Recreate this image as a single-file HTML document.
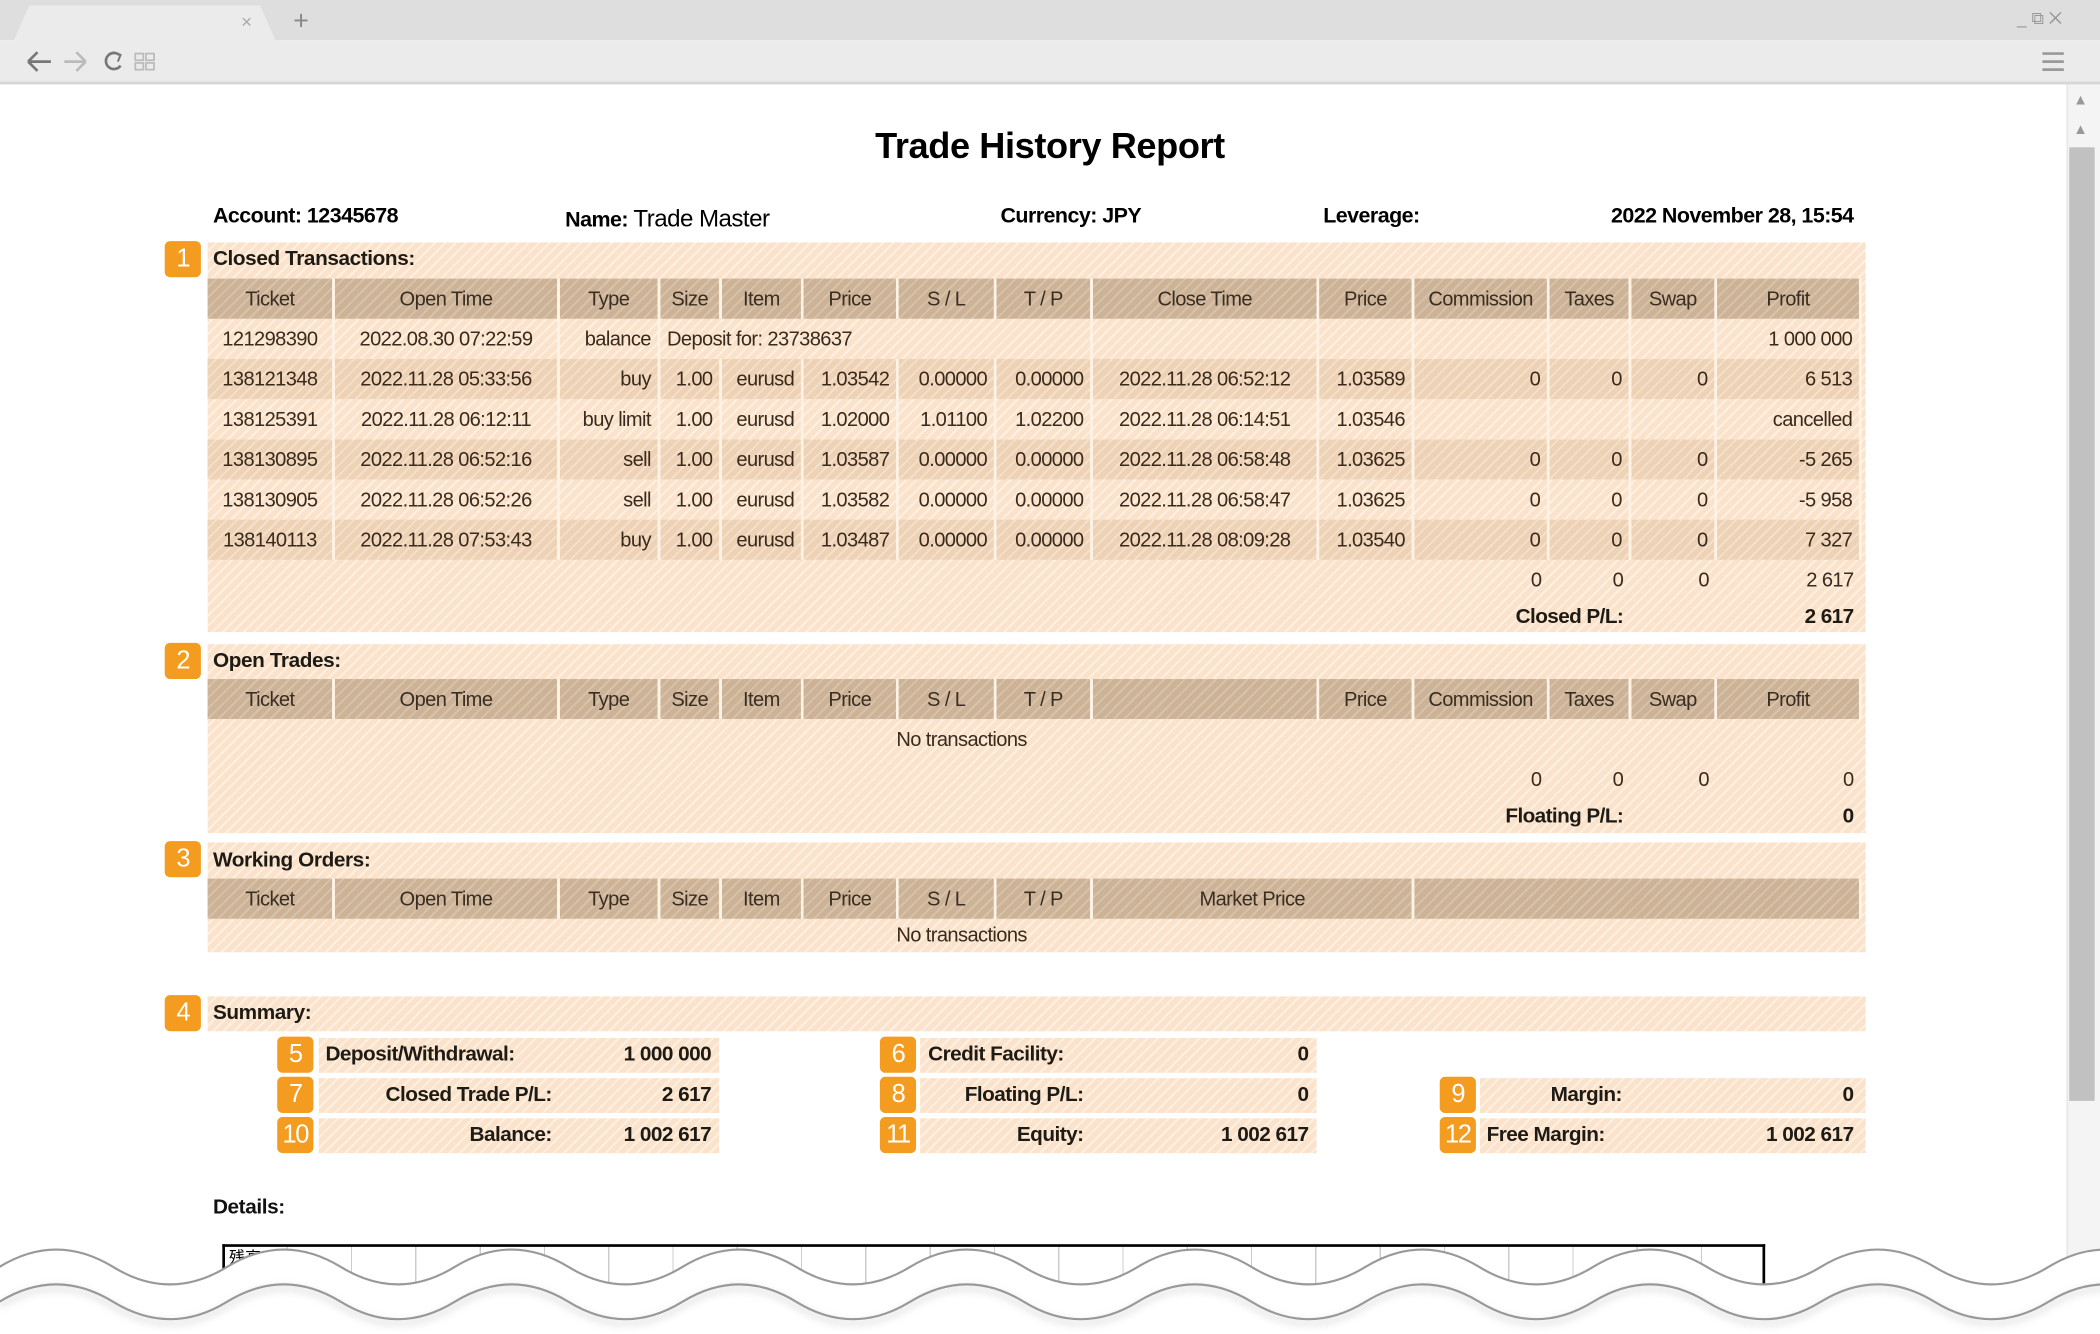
<!DOCTYPE html>
<html><head><meta charset="utf-8">
<style>
*{margin:0;padding:0;box-sizing:border-box}
html,body{width:2100px;height:1334px;overflow:hidden;background:#fff}
#w{position:absolute;left:0;top:0;width:1568px;height:996px;transform:scale(1.33929);transform-origin:0 0;font-family:"Liberation Sans",sans-serif;color:#3a2a1c}
.abs{position:absolute}
.tabbar{left:0;top:0;width:1568px;height:30px;background:#dedede}
.tab{left:10px;top:4px;width:196px;height:27px;background:#ebebeb;border-radius:8px 8px 0 0;clip-path:polygon(0 100%,6% 0,94% 0,100% 100%)}
.tool{left:0;top:30px;width:1568px;height:33px;background:#ebebeb;border-bottom:2px solid #d6d6d6}
.sb{left:1543px;top:63px;width:25px;height:933px;background:#f4f4f4;border-left:1px solid #e4e4e4}
.thumb{left:1545px;top:110px;width:19px;height:712px;background:#c1c1c1}
.title{left:0;width:1568px;top:94px;text-align:center;font:bold 27px "Liberation Sans",sans-serif;color:#000;letter-spacing:-0.3px}
.hd{top:153px;font:bold 16px "Liberation Sans",sans-serif;color:#000;white-space:nowrap;letter-spacing:-0.4px}
.stripe{background:repeating-linear-gradient(135deg,#fbe3cb 0 4px,#fdf0e2 4px 5.5px)}
.sec{left:155px;width:1238px}
.sh{font:bold 15.5px "Liberation Sans",sans-serif;color:#1e1a14;padding:0 4px;line-height:26px;height:26px;letter-spacing:-0.3px}
.badge{width:27px;height:27px;background:#f39c1f;border-radius:4px;color:#fff;font:19px "Liberation Sans",sans-serif;text-align:center;line-height:27px;letter-spacing:-1px}
table{border-collapse:collapse;table-layout:fixed;width:1234px;font-size:15px;letter-spacing:-0.45px}
td,th{height:30px;padding:0 5px;white-space:nowrap;overflow:hidden;border-right:2px solid rgba(255,245,235,.8)}
th{font-weight:normal;text-align:center;background:repeating-linear-gradient(135deg,#ccb398 0 4px,#d8c2a9 4px 5.5px);color:#3a2e22}
td{text-align:right}
tr.d td{background:repeating-linear-gradient(135deg,#eed2b6 0 4px,#f4e0cb 4px 5.5px)}
td.c{text-align:center}td.l{text-align:left}
td.b{font-weight:bold;font-size:15.5px;color:#1e1a14}
.sum{height:26px;font:bold 15.5px "Liberation Sans",sans-serif;color:#1e1a14;line-height:26px;letter-spacing:-0.4px}
.sum span{position:absolute;white-space:nowrap}
</style></head><body><div id="w">
<div class="abs tabbar"></div>
<div class="abs tab"></div>
<div class="abs" style="left:180px;top:8px;color:#aaa;font:14px 'Liberation Sans',sans-serif">×</div>
<div class="abs" style="left:219px;top:5px;color:#888;font:20px 'Liberation Sans',sans-serif">+</div>
<div class="abs" style="left:1506px;top:6px;color:#999;font:13px 'Liberation Sans',sans-serif">_ &#x29C9; ✕</div>
<div class="abs tool"></div>
<svg class="abs" style="left:18px;top:36px" width="105" height="20" viewBox="0 0 105 20" fill="none" stroke-width="2">
<path d="M3 10H20M3 10L10 3M3 10L10 17" stroke="#777"/>
<path d="M30 10H46M46 10L39 3M46 10L39 17" stroke="#bbb"/>
<path d="M71 5A6 6 0 1 0 72 13" stroke="#777"/><path d="M66 3L72 5L70 10" stroke="#777" stroke-width="1.5"/>
<rect x="83" y="4" width="6" height="5" stroke="#bbb" stroke-width="1.3"/><rect x="91" y="4" width="6" height="5" stroke="#bbb" stroke-width="1.3"/><rect x="83" y="11" width="6" height="5" stroke="#bbb" stroke-width="1.3"/><rect x="91" y="11" width="6" height="5" stroke="#bbb" stroke-width="1.3"/>
</svg>
<svg class="abs" style="left:1524px;top:37px" width="20" height="18"><path d="M1 3H17M1 9H17M1 15H17" stroke="#999" stroke-width="2"/></svg>
<div class="abs sb"></div>
<div class="abs" style="left:1548px;top:69px;color:#999;font:11px 'Liberation Sans'">▲</div>
<div class="abs" style="left:1548px;top:91px;color:#999;font:11px 'Liberation Sans'">▲</div>
<div class="abs thumb"></div>

<div class="abs title">Trade History Report</div>
<div class="abs hd" style="left:159px">Account: 12345678</div>
<div class="abs hd" style="left:422px">Name: <span style="font-weight:normal;font-size:18px">Trade Master</span></div>
<div class="abs hd" style="left:747px">Currency: JPY</div>
<div class="abs hd" style="left:988px">Leverage:</div>
<div class="abs hd" style="left:1176px;width:208px;text-align:right">2022 November 28, 15:54</div>

<!-- Section 1 -->
<div class="abs badge" style="left:123px;top:180px">1</div>
<div class="abs sec stripe" style="top:181px;height:291px">
<div class="sh">Closed Transactions:</div>
<table style="margin-top:1px">
<colgroup><col style="width:94px"><col style="width:168px"><col style="width:75px"><col style="width:46px"><col style="width:61px"><col style="width:71px"><col style="width:73px"><col style="width:72px"><col style="width:169px"><col style="width:71px"><col style="width:101px"><col style="width:61px"><col style="width:64px"><col style="width:108px"></colgroup>
<tr><th>Ticket</th><th>Open Time</th><th>Type</th><th>Size</th><th>Item</th><th>Price</th><th>S / L</th><th>T / P</th><th>Close Time</th><th>Price</th><th>Commission</th><th>Taxes</th><th>Swap</th><th>Profit</th></tr>
<tr><td class="c">121298390</td><td class="c">2022.08.30 07:22:59</td><td>balance</td><td class="l" colspan="5">Deposit for: 23738637</td><td></td><td></td><td></td><td></td><td></td><td>1 000 000</td></tr>
<tr class="d"><td class="c">138121348</td><td class="c">2022.11.28 05:33:56</td><td>buy</td><td>1.00</td><td>eurusd</td><td>1.03542</td><td>0.00000</td><td>0.00000</td><td class="c">2022.11.28 06:52:12</td><td>1.03589</td><td>0</td><td>0</td><td>0</td><td>6 513</td></tr>
<tr><td class="c">138125391</td><td class="c">2022.11.28 06:12:11</td><td>buy limit</td><td>1.00</td><td>eurusd</td><td>1.02000</td><td>1.01100</td><td>1.02200</td><td class="c">2022.11.28 06:14:51</td><td>1.03546</td><td></td><td></td><td></td><td>cancelled</td></tr>
<tr class="d"><td class="c">138130895</td><td class="c">2022.11.28 06:52:16</td><td>sell</td><td>1.00</td><td>eurusd</td><td>1.03587</td><td>0.00000</td><td>0.00000</td><td class="c">2022.11.28 06:58:48</td><td>1.03625</td><td>0</td><td>0</td><td>0</td><td>-5 265</td></tr>
<tr><td class="c">138130905</td><td class="c">2022.11.28 06:52:26</td><td>sell</td><td>1.00</td><td>eurusd</td><td>1.03582</td><td>0.00000</td><td>0.00000</td><td class="c">2022.11.28 06:58:47</td><td>1.03625</td><td>0</td><td>0</td><td>0</td><td>-5 958</td></tr>
<tr class="d"><td class="c">138140113</td><td class="c">2022.11.28 07:53:43</td><td>buy</td><td>1.00</td><td>eurusd</td><td>1.03487</td><td>0.00000</td><td>0.00000</td><td class="c">2022.11.28 08:09:28</td><td>1.03540</td><td>0</td><td>0</td><td>0</td><td>7 327</td></tr>
<tr><td colspan="10" style="border:0"></td><td style="border:0">0</td><td style="border:0">0</td><td style="border:0">0</td><td style="border:0">2 617</td></tr>
<tr><td colspan="12" class="b" style="border:0;height:25px">Closed P/L:</td><td style="border:0;height:25px"></td><td class="b" style="border:0;height:25px">2 617</td></tr>
</table></div>

<!-- Section 2 -->
<div class="abs badge" style="left:123px;top:480px">2</div>
<div class="abs sec stripe" style="top:481px;height:141px">
<div class="sh">Open Trades:</div>
<table>
<colgroup><col style="width:94px"><col style="width:168px"><col style="width:75px"><col style="width:46px"><col style="width:61px"><col style="width:71px"><col style="width:73px"><col style="width:72px"><col style="width:169px"><col style="width:71px"><col style="width:101px"><col style="width:61px"><col style="width:64px"><col style="width:108px"></colgroup>
<tr><th style="height:29px">Ticket</th><th>Open Time</th><th>Type</th><th>Size</th><th>Item</th><th>Price</th><th>S / L</th><th>T / P</th><th></th><th>Price</th><th>Commission</th><th>Taxes</th><th>Swap</th><th>Profit</th></tr>
<tr><td colspan="13" class="c" style="border:0">No transactions</td><td style="border:0"></td></tr>
<tr><td colspan="10" style="border:0"></td><td style="border:0">0</td><td style="border:0">0</td><td style="border:0">0</td><td style="border:0">0</td></tr>
<tr><td colspan="12" class="b" style="border:0;height:26px">Floating P/L:</td><td style="border:0;height:26px"></td><td class="b" style="border:0;height:26px">0</td></tr>
</table></div>

<!-- Section 3 -->
<div class="abs badge" style="left:123px;top:628px">3</div>
<div class="abs sec stripe" style="top:629px;height:82px">
<div class="sh" style="height:27px;line-height:27px">Working Orders:</div>
<table>
<colgroup><col style="width:94px"><col style="width:168px"><col style="width:75px"><col style="width:46px"><col style="width:61px"><col style="width:71px"><col style="width:73px"><col style="width:72px"><col style="width:169px"><col style="width:71px"><col style="width:101px"><col style="width:61px"><col style="width:64px"><col style="width:108px"></colgroup>
<tr><th>Ticket</th><th>Open Time</th><th>Type</th><th>Size</th><th>Item</th><th>Price</th><th>S / L</th><th>T / P</th><th colspan="2">Market Price</th><th colspan="4"></th></tr>
<tr><td colspan="13" class="c" style="border:0;height:25px">No transactions</td><td style="border:0;height:25px"></td></tr>
</table></div>

<!-- Summary -->
<div class="abs badge" style="left:123px;top:743px">4</div>
<div class="abs sec stripe sh" style="top:744px;height:26px">Summary:</div>

<div class="abs badge" style="left:207px;top:774px">5</div>
<div class="abs stripe sum" style="left:238px;top:775px;width:299px"><span style="left:5px">Deposit/Withdrawal:</span><span style="right:6px">1 000 000</span></div>
<div class="abs badge" style="left:207px;top:804px">7</div>
<div class="abs stripe sum" style="left:238px;top:805px;width:299px"><span style="right:125px">Closed Trade P/L:</span><span style="right:6px">2 617</span></div>
<div class="abs badge" style="left:207px;top:834px">10</div>
<div class="abs stripe sum" style="left:238px;top:835px;width:299px"><span style="right:125px">Balance:</span><span style="right:6px">1 002 617</span></div>

<div class="abs badge" style="left:657px;top:774px">6</div>
<div class="abs stripe sum" style="left:687px;top:775px;width:296px"><span style="left:6px">Credit Facility:</span><span style="right:6px">0</span></div>
<div class="abs badge" style="left:657px;top:804px">8</div>
<div class="abs stripe sum" style="left:687px;top:805px;width:296px"><span style="right:174px">Floating P/L:</span><span style="right:6px">0</span></div>
<div class="abs badge" style="left:657px;top:834px">11</div>
<div class="abs stripe sum" style="left:687px;top:835px;width:296px"><span style="right:174px">Equity:</span><span style="right:6px">1 002 617</span></div>

<div class="abs badge" style="left:1075px;top:804px">9</div>
<div class="abs stripe sum" style="left:1105px;top:805px;width:288px"><span style="right:182px">Margin:</span><span style="right:9px">0</span></div>
<div class="abs badge" style="left:1075px;top:834px">12</div>
<div class="abs stripe sum" style="left:1105px;top:835px;width:288px"><span style="left:5px">Free Margin:</span><span style="right:9px">1 002 617</span></div>

<div class="abs" style="left:159px;top:893px;font:bold 15.5px 'Liberation Sans',sans-serif;color:#111;letter-spacing:-0.3px">Details:</div>
<div class="abs" style="left:166px;top:929px;width:1152px;height:60px;border:2px solid #000;border-bottom:0;background:repeating-linear-gradient(90deg,transparent 0 46px,#ccc 46px 47px,transparent 47px 48px)"></div>
<div class="abs" style="left:171px;top:932px;font:12px 'Noto Sans CJK JP',sans-serif;color:#000;line-height:14px">残高</div>

<svg class="abs" style="left:0;top:0" width="1568" height="996">
<defs><filter id="sh" x="-5%" y="-50%" width="110%" height="200%"><feDropShadow dx="0" dy="3" stdDeviation="3" flood-color="#000" flood-opacity=".25"/></filter></defs>
<path d="M-0.5,946 Q42,920 84.5,946 T169.5,946 T254.5,946 T339.5,946 T424.5,946 T509.5,946 T594.5,946 T679.5,946 T764.5,946 T849.5,946 T934.5,946 T1019.5,946 T1104.5,946 T1189.5,946 T1274.5,946 T1359.5,946 T1444.5,946 T1529.5,946 T1614.5,946 L1614.5,1000 L-0.5,1000 Z" fill="#fff"/>
<path d="M-0.5,946 Q42,920 84.5,946 T169.5,946 T254.5,946 T339.5,946 T424.5,946 T509.5,946 T594.5,946 T679.5,946 T764.5,946 T849.5,946 T934.5,946 T1019.5,946 T1104.5,946 T1189.5,946 T1274.5,946 T1359.5,946 T1444.5,946 T1529.5,946 T1614.5,946" fill="none" stroke="#999" stroke-width="1.6"/>
<path d="M-0.5,972 Q42,946 84.5,972 T169.5,972 T254.5,972 T339.5,972 T424.5,972 T509.5,972 T594.5,972 T679.5,972 T764.5,972 T849.5,972 T934.5,972 T1019.5,972 T1104.5,972 T1189.5,972 T1274.5,972 T1359.5,972 T1444.5,972 T1529.5,972 T1614.5,972" fill="none" stroke="#999" stroke-width="1.6" filter="url(#sh)"/>
</svg>
</div></body></html>
